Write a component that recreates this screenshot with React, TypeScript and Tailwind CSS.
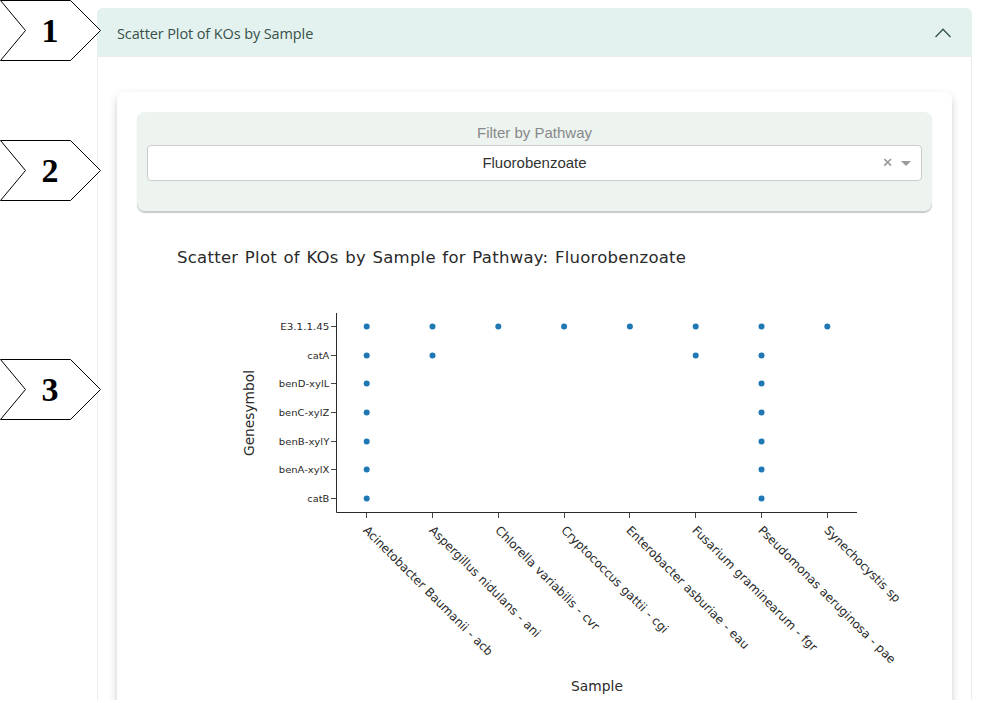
const samples = [
  { name: "Acinetobacter Baumanii - acb", x: 366.5, length: 177.5 },
  { name: "Aspergillus nidulans - ani", x: 432.5, length: 151.5 },
  { name: "Chlorella variabilis - cvr", x: 498.5, length: 141.5 },
  { name: "Cryptococcus gattii - cgi", x: 564.5, length: 145.5 },
  { name: "Enterobacter asburiae - eau", x: 629.5, length: 168 },
  { name: "Fusarium graminearum - fgr", x: 695.5, length: 171 },
  { name: "Pseudomonas aeruginosa - pae", x: 761.5, length: 188.5 },
  { name: "Synechocystis sp", x: 827.5, length: 102 },
];

const genes = [
  { name: "E3.1.1.45", y: 326.5, length: 49, hits: [0, 1, 2, 3, 4, 5, 6, 7] },
  { name: "catA", y: 355.5, length: 22, hits: [0, 1, 5, 6] },
  { name: "benD-xylL", y: 383.5, length: 50.5, hits: [0, 6] },
  { name: "benC-xylZ", y: 412.5, length: 50.5, hits: [0, 6] },
  { name: "benB-xylY", y: 441.5, length: 50.5, hits: [0, 6] },
  { name: "benA-xylX", y: 469.5, length: 50.5, hits: [0, 6] },
  { name: "catB", y: 498.5, length: 22, hits: [0, 6] },
];

const callouts = [
  { label: "1", place: "top-0" },
  { label: "2", place: "top-[140px]" },
  { label: "3", place: "top-[359px]" },
];

function Callout({ label, place }: { label: string; place: string }) {
  return (
    <div className={`absolute left-0 flex h-[61px] w-[102px] items-center ${place}`}>
      <svg className="absolute inset-0" width="102" height="61" viewBox="0 0 102 61">
        <path d="M.5.5H70.5L100.5 30.5L70.5 60.5H.5L25.5 30.5Z" fill="#fff" stroke="#000" />
      </svg>
      <span className="relative w-full pt-px pr-0.5 text-center font-['Liberation_Serif',serif] text-[34px] leading-none font-bold text-black">
        {label}
      </span>
    </div>
  );
}

function ScatterPlot() {
  return (
    <svg
      className="block font-['DejaVu_Sans',sans-serif]"
      width="835"
      height="508"
      viewBox="117 212 835 508"
      fill="#2a2a2a"
    >
      <text x="177" y="263" fontSize="16.5" wordSpacing="1" textLength="509" lengthAdjust="spacing">
        Scatter Plot of KOs by Sample for Pathway: Fluorobenzoate
      </text>
      <path d="M336.5 313V512.5H857" fill="none" stroke="#2a2a2a" />
      {genes.map((gene) => (
        <g key={gene.name}>
          <path d={`M331 ${gene.y}H336`} stroke="#444" />
          <text
            x={329.3 - gene.length}
            y={gene.y + 3.5}
            fontSize="9.5"
            textLength={gene.length}
            lengthAdjust="spacingAndGlyphs"
          >
            {gene.name}
          </text>
          {gene.hits.map((i) => (
            <circle key={i} cx={366.7 + i * 65.8} cy={gene.y} r="3" fill="#1f77b4" />
          ))}
        </g>
      ))}
      {samples.map((sample) => (
        <g key={sample.name}>
          <path d={`M${sample.x} 513V518`} stroke="#444" />
          <text
            transform={`translate(${sample.x - 4} 531) rotate(45)`}
            fontSize="12"
            wordSpacing="0.6"
            textLength={sample.length}
            lengthAdjust="spacing"
          >
            {sample.name}
          </text>
        </g>
      ))}
      <text x="571" y="691" fontSize="13.8" textLength="52" lengthAdjust="spacing">
        Sample
      </text>
      <text
        transform="translate(254 456) rotate(-90)"
        fontSize="13.8"
        textLength="86"
        lengthAdjust="spacing"
      >
        Genesymbol
      </text>
    </svg>
  );
}

export default function App() {
  return (
    <div className="relative h-[703px] w-[981px] overflow-hidden bg-white">
      <div className="flex h-[700px] overflow-hidden pt-2 pl-[97px]">
        <section className="h-[740px] w-[875px] rounded-t-md border border-[#ececec]">
          <header className="-mx-px -mt-px flex h-[49px] items-center justify-between rounded-t-md border-b border-[#e9eeec] bg-[#e3f2ee] pr-5 pl-5">
            <h2 className="pt-[3px] font-['Open_Sans','Noto_Sans',sans-serif] text-[14.5px] tracking-[-0.11px] text-[#38504b]">
              Scatter Plot of KOs by Sample
            </h2>
            <svg className="relative top-px" width="18" height="12" viewBox="0 0 18 12" fill="none" stroke="#34524b" strokeWidth="1.3">
              <path d="M1.5 10L9 2.3L16.5 10" />
            </svg>
          </header>
          <div className="mt-[35px] ml-[19px] w-[835px] rounded-lg bg-white shadow-[0_4px_8px_rgba(0,0,0,0.2)]">
            <div className="px-5 pt-5">
              <div className="h-[100px] rounded-lg bg-[#edf4f0] px-2.5 pt-[11px] text-center font-['Liberation_Sans',sans-serif] shadow-[0_1px_1px_rgba(0,0,0,0.22),inset_0_-1px_0_#c8ccca]">
                <div className="h-[22px] text-[15px] leading-[20px] text-[#888]">Filter by Pathway</div>
                <div className="relative h-9 rounded border border-[#ccc] bg-white text-[15px] leading-[34px] text-[#333]">
                  Fluorobenzoate
                  <svg className="absolute top-3 right-[9px]" width="30" height="10" viewBox="0 0 30 10">
                    <path d="M2.3 1L9 7.7M9 1L2.3 7.7" stroke="#999" strokeWidth="1.7" />
                    <path d="M19 3H29L24 8Z" fill="#999" />
                  </svg>
                </div>
              </div>
            </div>
            <ScatterPlot />
          </div>
        </section>
      </div>
      {callouts.map((callout) => (
        <Callout key={callout.label} {...callout} />
      ))}
    </div>
  );
}
